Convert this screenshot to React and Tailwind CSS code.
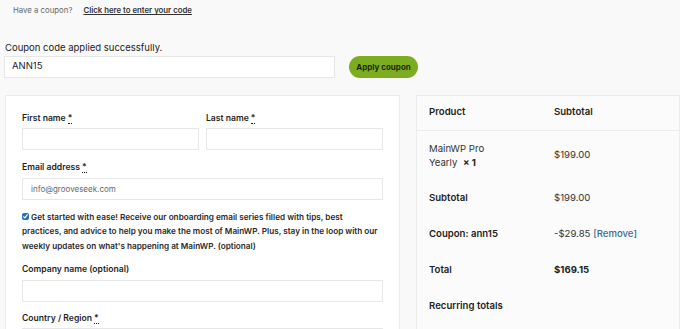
import React from "react";

const Label = ({ children, req }) => (
  <label className="block text-[8.6px] font-semibold text-[#1e1e1e] leading-none mb-[6px]">
    {children}
    {req && (
      <abbr className="ml-[2px] text-[#1e1e1e] no-underline border-b border-dotted border-[#1e1e1e]">*</abbr>
    )}
  </label>
);

const Field = ({ className = "", value = "" }) => (
  <div
    className={`h-[22px] bg-white border border-[#e6e6e6] flex items-center px-[8px] text-[8px] text-[#666] ${className}`}
  >
    {value}
  </div>
);

const Row = ({ left, right }) => (
  <div className="flex items-center h-[36px]">
    <div className="w-[137px] pl-[12px]">{left}</div>
    <div className="flex-1">{right}</div>
  </div>
);

export default function App() {
  return (
    <div className="w-[680px] h-[329px] overflow-hidden bg-[#f9f9f9] font-['Inter',sans-serif] text-[#1e1e1e]">
      <div className="h-[22px] flex items-center pl-[13px] text-[7.8px] gap-[11px]">
        <span className="text-[#666]">Have a coupon?</span>
        <span className="font-semibold underline text-[#333]">Click here to enter your code</span>
      </div>
      <div className="pl-[5px] pt-[21px] text-[9.5px] leading-none text-[#222]">
        Coupon code applied successfully.
      </div>
      <div className="flex items-center mt-[3px] pl-[4px]">
        <div className="w-[331px] h-[22px] bg-white border border-[#e6e6e6] flex items-center px-[7px] text-[9.5px] text-[#222]">
          ANN15
        </div>
        <button className="ml-[14px] h-[22px] w-[69px] rounded-full bg-[#7cad20] text-[8px] font-bold text-[#1c2a0a]">
          Apply coupon
        </button>
      </div>
      <div className="flex mt-[17px] pl-[5px] gap-[16px]">
        <div className="w-[395px] h-[240px] bg-white border border-[#ececec] px-[16px] pt-[18px]">
          <div className="flex gap-[7px]">
            <div className="w-[177px]">
              <Label req>First name</Label>
              <Field />
            </div>
            <div className="w-[177px]">
              <Label req>Last name</Label>
              <Field />
            </div>
          </div>
          <div className="mt-[13px]">
            <Label req>Email address</Label>
            <Field value="info@grooveseek.com" />
          </div>
          <div className="mt-[10px] text-[8.2px] font-semibold leading-[14.5px] text-[#2a2a2a]">
            <input
              type="checkbox"
              defaultChecked
              className="w-[7px] h-[7px] align-[-0.5px] mr-[2px] accent-[#2271b1]"
            />
            Get started with ease! Receive our onboarding email series filled with tips, best practices, and advice to help you make the most of MainWP. Plus, stay in the loop with our weekly updates on what's happening at MainWP. (optional)
          </div>
          <div className="mt-[12px]">
            <Label>Company name (optional)</Label>
            <Field />
          </div>
          <div className="mt-[12px]">
            <Label req>Country / Region</Label>
            <Field />
          </div>
        </div>
        <div className="flex-1 h-[240px] bg-[#fbfbfb] border border-[#ececec] text-[9.6px]">
          <div className="flex items-center h-[35px] border-b border-[#ececec] font-semibold">
            <div className="w-[137px] pl-[12px]">Product</div>
            <div>Subtotal</div>
          </div>
          <div className="flex items-center h-[50px]">
            <div className="w-[137px] pl-[12px] leading-[14px] text-[#333]">
              MainWP Pro
              <br />
              Yearly <span className="ml-[3px] font-bold text-[#1e1e1e]">× 1</span>
            </div>
            <div className="text-[#333]">$199.00</div>
          </div>
          <Row left={<span className="font-semibold">Subtotal</span>} right={<span className="text-[#333]">$199.00</span>} />
          <Row
            left={<span className="font-semibold">Coupon: ann15</span>}
            right={
              <span className="text-[#333]">
                -$29.85 <span className="text-[#3d6b8f] font-medium">[Remove]</span>
              </span>
            }
          />
          <Row left={<span className="font-semibold">Total</span>} right={<span className="font-bold">$169.15</span>} />
          <Row left={<span className="font-semibold">Recurring totals</span>} right={null} />
        </div>
      </div>
    </div>
  );
}
